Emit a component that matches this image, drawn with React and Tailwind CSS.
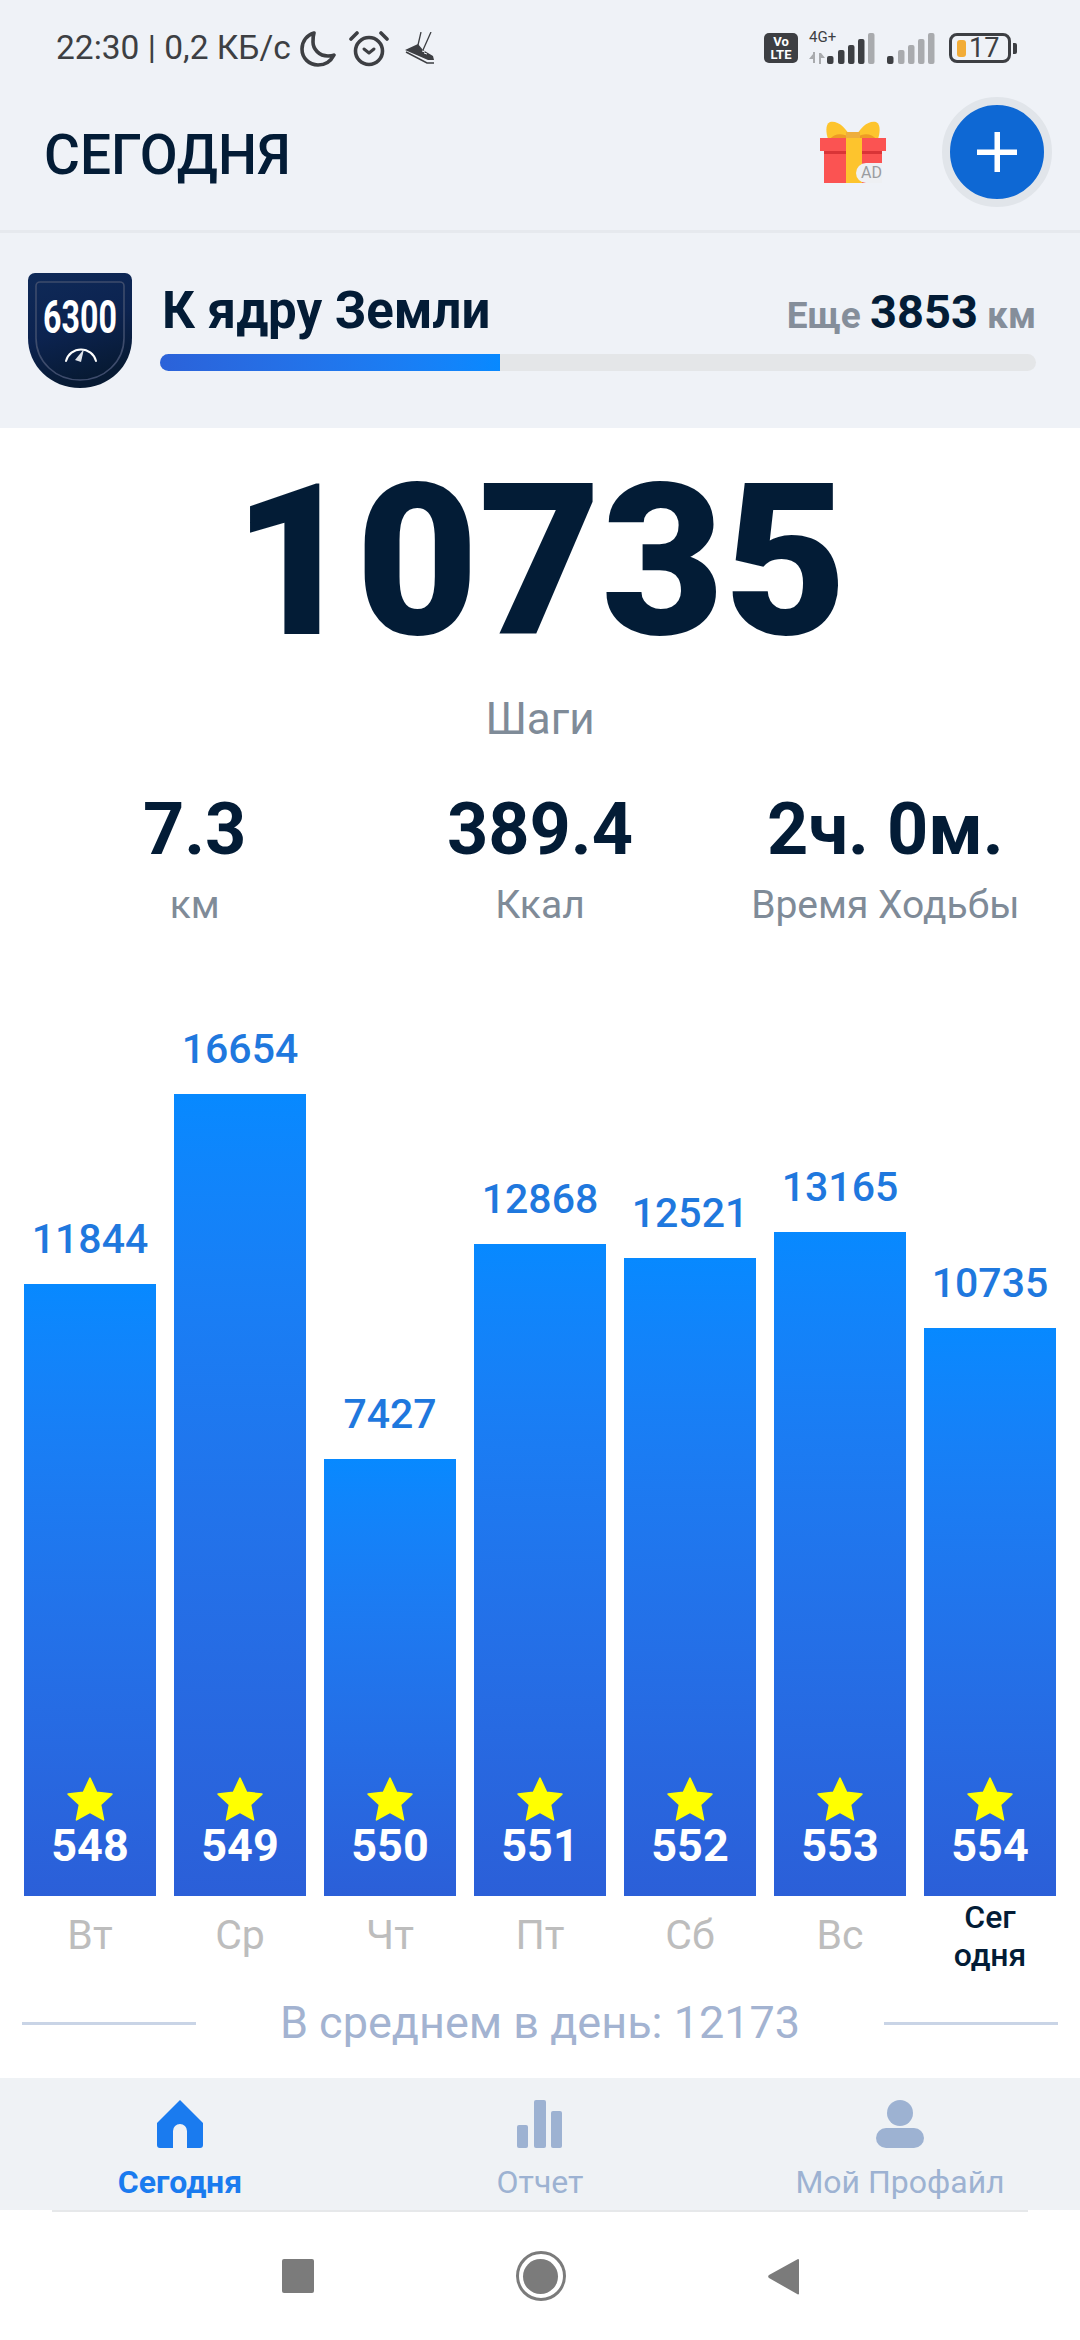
const days = [
  { steps: 11844, height: 612, stars: 548, day: "Вт" },
  { steps: 16654, height: 802, stars: 549, day: "Ср" },
  { steps: 7427, height: 437, stars: 550, day: "Чт" },
  { steps: 12868, height: 652, stars: 551, day: "Пт" },
  { steps: 12521, height: 638, stars: 552, day: "Сб" },
  { steps: 13165, height: 664, stars: 553, day: "Вс" },
  { steps: 10735, height: 568, stars: 554, day: "Сегодня", today: true },
];

const stats = [
  { value: "7.3", label: "км" },
  { value: "389.4", label: "Ккал" },
  { value: "2ч. 0м.", label: "Время Ходьбы" },
];

function Moon() {
  return (
    <svg width="36" height="37" viewBox="0 0 36 37" fill="none">
      <path
        d="M14 3C7 5 2 11 2 19c0 9 7 16 16 16 7 0 13-4 16-10-2 1-4 1-6 1-9 0-15-7-15-14 0-3 0-6 1-9z"
        stroke="#3d3f43"
        strokeWidth="3.6"
        strokeLinejoin="round"
      />
    </svg>
  );
}

function Alarm() {
  return (
    <svg width="40" height="37" viewBox="0 0 40 37" fill="none" stroke="#3d3f43" strokeLinecap="round">
      <circle cx="20" cy="21" r="13.5" strokeWidth="3.6" />
      <path d="M15 19l5 4 5-4" strokeWidth="3" strokeLinejoin="round" />
      <path d="M2 9l6-6M38 9l-6-6" strokeWidth="3.6" />
    </svg>
  );
}

// running shoe, toe down, with the two laces going up
function Shoe() {
  return (
    <svg width="32" height="32" viewBox="0 0 32 32" fill="none">
      <path d="M13 13L16 0M18 18L26 0" stroke="#3d3f43" strokeWidth="1.3" />
      <path d="M0 18L13 12l5 6 10 6 1 4-6 0z" fill="#3d3f43" />
      <path d="M1 20l21 11h7" stroke="#3d3f43" strokeWidth="1.5" />
      <path d="M19 21l3 1M17 19l3 1" stroke="#eff2f7" strokeWidth="1" />
    </svg>
  );
}

function Signal({ dark }) {
  const on = "#3d3f43";
  const off = "#a9abae";
  const bars = [
    { x: 0, h: 8, fill: on },
    { x: 11, h: 14, fill: dark ? on : off },
    { x: 21, h: 19, fill: dark ? on : off },
    { x: 31, h: 25, fill: dark ? on : off },
    { x: 41, h: 31, fill: off },
  ];
  return (
    <svg width="48" height="31" viewBox="0 0 48 31">
      {bars.map((b) => (
        <rect key={b.x} x={b.x} y={31 - b.h} width="6.5" height={b.h} rx="2" fill={b.fill} />
      ))}
    </svg>
  );
}

function StatusBar() {
  return (
    <div className="h-[96px] flex items-center justify-between pl-[56px] pr-[63px] text-[#3d3f43]">
      <div className="flex items-center">
        <span className="text-[33.500px] leading-[40px] w-[244px] whitespace-nowrap">22:30 | 0,2 КБ/с</span>
        <Moon />
        <span className="ml-[13px]"><Alarm /></span>
        <span className="ml-[16px]"><Shoe /></span>
      </div>
      <div className="flex items-center">
        <div className="w-[34px] h-[30px] rounded-[5px] bg-[#3d3f43] text-white text-[13px] leading-[13px] font-bold text-center pt-[2px]">
          Vo<br />LTE
        </div>
        <div className="relative w-[66px] h-[32px] ml-[11px]">
          <span className="absolute left-0 top-[-3px] text-[15px] leading-[16px]">4G+</span>
          <svg className="absolute left-0 bottom-0" width="16" height="12" viewBox="0 0 16 12" fill="#a9abae">
            <path d="M4 0h2v11H4zM0 7l4-5v5zM10 1h2v11h-2zM12 1l4 5h-4z" />
          </svg>
          <span className="absolute right-0 bottom-0"><Signal dark /></span>
        </div>
        <span className="ml-[12px]"><Signal /></span>
        <div className="ml-[14px] w-[62px] h-[30px] rounded-[8px] border-[3px] border-[#3d3f43] flex items-center pl-[5px]">
          <span className="w-[9px] h-[17px] rounded-[3px] bg-[#f2ac37]" />
          <span className="ml-[3px] text-[27px] leading-[24px]">17</span>
        </div>
        <span className="ml-[2px] w-[4px] h-[11px] rounded-r-[2px] bg-[#3d3f43]" />
      </div>
    </div>
  );
}

function Gift() {
  return (
    <div className="relative w-[66px] h-[62px]">
      <svg width="66" height="62" viewBox="0 0 66 62">
        <path d="M31 17C26 6 17-1 10 1 5 3 6 12 8 18z" fill="#fdc42d" />
        <path d="M35 17C40 6 49-1 56 1c5 2 4 11 2 17z" fill="#fdc42d" />
        <path d="M10 18c4-6 13-6 19-2l3 4H8zM56 18c-4-6-13-6-19-2l-3 4h24z" fill="#ee9b25" />
        <rect x="26" y="11" width="14" height="8" fill="#eeae3c" />
        <rect x="0" y="17" width="66" height="13" fill="#fb5352" />
        <rect x="4" y="30" width="58" height="32" fill="#fb5352" />
        <rect x="4" y="30" width="58" height="3" fill="#d93437" />
        <rect x="26" y="17" width="16" height="45" fill="#fdc42d" />
      </svg>
      <span className="absolute right-[4px] bottom-[0px] w-[26px] h-[20px] rounded-l-full bg-[#eef0f3] text-[#9a9c9f] text-[16px] leading-[20px] text-right">
        AD
      </span>
    </div>
  );
}

function Header() {
  return (
    <div className="h-[137px] border-b-[3px] border-[#e6e9ee] flex items-center pl-[44px] pr-[28px] pb-[22px]">
      <h1 className="text-[55px] leading-[60px] font-medium text-[#031c36] mt-[6px]">СЕГОДНЯ</h1>
      <div className="ml-auto flex items-center">
        <Gift />
        <button className="ml-[56px] w-[110px] h-[110px] rounded-full bg-[#0e68d4] border-[8px] border-[#e1e5ea] flex items-center justify-center">
          <svg width="40" height="40" viewBox="0 0 40 40" fill="#fff">
            <rect x="17.5" y="0" width="5.5" height="40" />
            <rect x="0" y="17.5" width="40" height="5.5" />
          </svg>
        </button>
      </div>
    </div>
  );
}

function Badge() {
  return (
    <svg width="104" height="115" viewBox="0 0 104 115" className="shrink-0">
      <defs>
        <linearGradient id="shield" x1="0" y1="0" x2="0.3" y2="1">
          <stop offset="0" stopColor="#0f2a58" />
          <stop offset="0.55" stopColor="#0c2350" />
          <stop offset="1" stopColor="#071a33" />
        </linearGradient>
      </defs>
      <path d="M7 0h90a7 7 0 0 1 7 7v58c0 28-23 50-52 50S0 93 0 65V7a7 7 0 0 1 7-7z" fill="url(#shield)" />
      <path
        d="M12 9h80a4 4 0 0 1 4 4v52c0 24-20 42-44 42S8 89 8 65V13a4 4 0 0 1 4-4z"
        fill="none"
        stroke="#3e4c6c"
        strokeWidth="1.6"
      />
      {/* narrow digits: squeeze the font horizontally */}
      <g transform="translate(52 60) scale(0.7 1)">
        <text textAnchor="middle" fill="#fff" fontFamily="Roboto" fontWeight="700" fontSize="46">
          6300
        </text>
      </g>
      <path d="M38 88a15.500 15.500 0 0 1 30 0" fill="none" stroke="#fff" strokeWidth="2" strokeLinecap="round" />
      <path d="M47 87l9-11-3 13z" fill="#dfe3ea" />
    </svg>
  );
}

function Challenge() {
  return (
    <div className="h-[195px] flex items-center pl-[28px] pr-[44px]">
      <Badge />
      <div className="flex-1 ml-[28px] mb-[10px]">
        <div className="flex items-baseline justify-between h-[60px] mt-[1px]">
          <span className="text-[51px] leading-[60px] font-bold text-[#031c36] ml-[2px]">К ядру Земли</span>
          <span className="text-[37px] font-bold text-[#858e9a] leading-[60px]">
            Еще <span className="text-[47px] text-[#031c36]">3853</span> км
          </span>
        </div>
        <div className="mt-[13px] h-[17px] rounded-full bg-[#e4e6e8] overflow-hidden">
          <div className="w-[340px] h-full bg-gradient-to-r from-[#2b62d9] to-[#0789ff]" />
        </div>
      </div>
    </div>
  );
}

function Star() {
  return (
    <svg width="48" height="46" viewBox="0 0 46 44">
      <path
        d="M23 2l6.300 13.600 14.700 1.700-10.900 10.100 2.900 14.600L23 34.700 10 42l2.900-14.600L2 17.300l14.700-1.700z"
        fill="#ffff00"
        stroke="#ffff00"
        strokeWidth="1.500"
        strokeLinejoin="round"
      />
    </svg>
  );
}

function Chart() {
  return (
    <div className="mt-auto flex items-end gap-[18px] px-[24px]">
      {days.map((d) => (
        <div key={d.stars} className="w-[132px] flex flex-col items-center">
          <span className="text-[41px] leading-[48px] font-medium text-[#1f78de] mb-[21px]">{d.steps}</span>
          <div
            className="w-full flex flex-col items-center justify-end pb-[27px] bg-gradient-to-b from-[#0789ff] to-[#2b5fd8]"
            style={{ height: d.height }}
          >
            <Star />
            <span className="text-[45px] leading-[47px] font-bold text-white">{d.stars}</span>
          </div>
        </div>
      ))}
    </div>
  );
}

function DayLabels() {
  return (
    <div className="h-[89px] flex gap-[18px] px-[24px]">
      {days.map((d) =>
        d.today ? (
          <span key={d.day} className="w-[132px] pt-[2px] text-center text-[32px] leading-[38px] font-medium text-[#031c36]">
            Сег<br />одня
          </span>
        ) : (
          <span key={d.day} className="w-[132px] pt-[16px] text-center text-[41px] leading-[46px] text-[#bdbdbd]">
            {d.day}
          </span>
        )
      )}
    </div>
  );
}

function BottomNav() {
  return (
    <div className="h-[132px] bg-[#eff2f5] grid grid-cols-3 pt-[22px] text-[32px] leading-[36px] text-[#9db2d2]">
      <div className="flex flex-col items-center">
        <svg width="46" height="48" viewBox="0 0 46 48" fill="#1a7bef">
          <path d="M23 0l23 23v22a3 3 0 0 1-3 3H30V31a7 7 0 0 0-14 0v17H3a3 3 0 0 1-3-3V23z" />
        </svg>
        <span className="mt-[16px] font-bold text-[#1a7bef]">Сегодня</span>
      </div>
      <div className="flex flex-col items-center">
        <svg width="46" height="48" viewBox="0 0 46 48" fill="#9db2d2">
          <rect x="0" y="25" width="11" height="23" rx="2" />
          <rect x="17" y="0" width="12" height="48" rx="2" />
          <rect x="34" y="11" width="11" height="37" rx="2" />
        </svg>
        <span className="mt-[16px]">Отчет</span>
      </div>
      <div className="flex flex-col items-center">
        <svg width="48" height="48" viewBox="0 0 48 48" fill="#9db2d2">
          <ellipse cx="24" cy="13" rx="13" ry="13" />
          <rect x="0" y="28" width="48" height="20" rx="10" />
        </svg>
        <span className="mt-[16px]">Мой Профайл</span>
      </div>
    </div>
  );
}

function SystemNav() {
  return (
    <div className="h-[128px] shrink-0 bg-white flex items-center justify-center gap-[202px]">
      <span className="w-[32px] h-[34px] rounded-[2px] bg-[#7b7b7b]" />
      <span className="w-[50px] h-[50px] rounded-full border-[3px] border-[#7b7b7b] flex items-center justify-center">
        <span className="w-[35px] h-[35px] rounded-full bg-[#7b7b7b]" />
      </span>
      <svg width="31" height="37" viewBox="0 0 31 37" fill="#7b7b7b">
        <path d="M30 1a1 1 0 0 1 1 1v33a1 1 0 0 1-1 1.500L1 20a2 2 0 0 1 0-3z" />
      </svg>
    </div>
  );
}

export default function App() {
  return (
    <div className="w-[1080px] h-[2340px] flex flex-col bg-[#eff2f7] font-['Roboto',sans-serif] overflow-hidden">
      <StatusBar />
      <Header />
      <Challenge />

      <main className="flex-1 bg-white flex flex-col pt-[24px] pb-[17px]">
        <div className="text-center text-[212px] leading-[220px] font-black text-[#031c36]">10735</div>
        <div className="mt-[17px] text-center text-[44px] leading-[60px] text-[#7f8b98]">Шаги</div>

        <div className="mt-[41px] px-[22px] grid grid-cols-3 text-center">
          {stats.map((s) => (
            <div key={s.label}>
              <div className="text-[72px] leading-[80px] font-bold text-[#031c36]">{s.value}</div>
              <div className="mt-[13px] text-[39px] leading-[44px] text-[#7f8b98]">{s.label}</div>
            </div>
          ))}
        </div>

        <Chart />
        <DayLabels />

        <div className="h-[76px] flex items-center justify-between px-[22px]">
          <span className="w-[174px] h-[3px] bg-[#c9d4e6]" />
          <span className="text-[45px] leading-[52px] text-[#a3b3d1]">В среднем в день: 12173</span>
          <span className="w-[174px] h-[3px] bg-[#c9d4e6]" />
        </div>
      </main>

      <BottomNav />
      <div className="bg-white px-[52px]">
        <div className="h-[2px] bg-[#e6e8ea]" />
      </div>
      <SystemNav />
    </div>
  );
}
